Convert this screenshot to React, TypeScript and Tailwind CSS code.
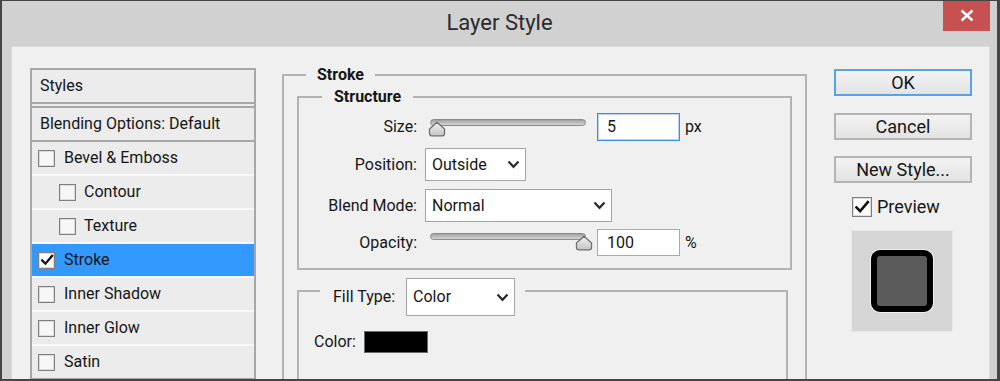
import React from 'react'

const STYLE_ROWS = [
  { label: 'Bevel & Emboss', indent: false, checked: false },
  { label: 'Contour', indent: true, checked: false },
  { label: 'Texture', indent: true, checked: false },
  { label: 'Stroke', indent: false, checked: true, active: true },
  { label: 'Inner Shadow', indent: false, checked: false },
  { label: 'Inner Glow', indent: false, checked: false },
  { label: 'Satin', indent: false, checked: false },
]

function Check({ size = 14 }: { size?: number }) {
  return (
    <svg width={size} height={size} viewBox="0 0 16 16" fill="none">
      <path d="M2.5 8.5 L6.2 12.2 L13.8 3.2" stroke="#111" strokeWidth="2.6" strokeLinecap="square" />
    </svg>
  )
}

function Checkbox({ checked, big = false }: { checked: boolean; big?: boolean }) {
  return (
    <div
      className={`flex items-center justify-center shrink-0 border border-[#7f7f7f] shadow-[inset_0_0_0_1px_#dcdcdc] ${
        big ? 'w-[20px] h-[20px]' : 'w-[17px] h-[17px]'
      } ${checked ? 'bg-white' : 'bg-[#f7f7f7]'}`}
    >
      {checked && <Check size={big ? 16 : 14} />}
    </div>
  )
}

function Chevron() {
  return (
    <svg width="13" height="9" viewBox="0 0 13 9" fill="none">
      <path d="M1.5 1.5 L6.5 6.8 L11.5 1.5" stroke="#2a2a2a" strokeWidth="2.2" />
    </svg>
  )
}

function Select({ value, width, height = 'h-[33px]' }: { value: string; width: string; height?: string }) {
  return (
    <div
      className={`${width} ${height} shrink-0 flex items-center justify-between bg-white border border-[#a4a4a4] pl-[6px] pr-[5px]`}
    >
      <span>{value}</span>
      <Chevron />
    </div>
  )
}

function Thumb() {
  return (
    <svg width="18" height="16" viewBox="0 0 18 16">
      <defs>
        <linearGradient id="thumbFill" x1="0" y1="0" x2="0" y2="1">
          <stop offset="0" stopColor="#f4f4f4" />
          <stop offset="1" stopColor="#c4c4c4" />
        </linearGradient>
      </defs>
      <path
        d="M1.5 8 L9 1.2 L16.5 8 L16.5 12.5 Q16.5 14.8 14.2 14.8 L3.8 14.8 Q1.5 14.8 1.5 12.5 Z"
        fill="url(#thumbFill)"
        stroke="#6f6f6f"
        strokeWidth="1.3"
        strokeLinejoin="round"
      />
    </svg>
  )
}

function Slider({ thumbLeft, trackTop, thumbTop }: { thumbLeft: string; trackTop: string; thumbTop: string }) {
  return (
    <div className="relative w-[156px] h-full ml-[13px] shrink-0">
      <div
        className={`absolute left-0 right-0 ${trackTop} h-[7px] rounded-full border border-[#8a8a8a] bg-linear-to-b from-[#a0a0a0] to-[#d6d6d6]`}
      />
      <div className={`absolute ${thumbLeft} ${thumbTop} leading-none`}>
        <Thumb />
      </div>
    </div>
  )
}

export default function App() {
  return (
    <div className="w-[1000px] h-[381px] overflow-hidden flex flex-col bg-[#d1d1d1] border-l-2 border-t border-r-[3px] border-b-2 border-[#454545] [font-family:Roboto,sans-serif] text-[16px] text-[#161616]">
      {/* Title bar */}
      <div className="relative h-[45px] shrink-0 flex items-center justify-center pb-[2px]">
        <span className="text-[22px] text-[#2b2b2b]">Layer Style</span>
        <div className="absolute top-[-1px] right-[7px] w-[47px] h-[31px] bg-[#c75050] flex items-center justify-center">
          <svg width="14" height="13" viewBox="0 0 14 13">
            <path d="M1.5 1.5 L12.5 11.5 M12.5 1.5 L1.5 11.5" stroke="#fff" strokeWidth="2.4" />
          </svg>
        </div>
      </div>

      {/* Dialog body */}
      <div className="flex-1 ml-[9px] w-[979px] bg-[#f0f0f0] border border-[#dadada] flex items-start pl-[18px] pt-[18px]">
        {/* Styles list */}
        <div className="mt-[3px] w-[226px] shrink-0 border-2 border-[#a7a7a7] bg-[#ececec]">
          <div className="h-[32px] flex items-center pl-[8px] border-b-2 border-[#a7a7a7] box-content">Styles</div>
          <div className="h-[2px]" />
          <div className="h-[36px] flex items-center pl-[8px] border-y-2 border-[#a7a7a7]">Blending Options: Default</div>
          {STYLE_ROWS.map((row, i) => (
            <div
              key={row.label}
              className={`flex items-center ${i === 0 ? 'h-[32px]' : 'h-[34px] border-t-2 border-[#f9f9f9]'} ${
                row.indent ? 'pl-[27px]' : 'pl-[6px]'
              } ${row.active ? 'bg-[#3399ff]' : ''}`}
            >
              <Checkbox checked={row.checked} />
              <span className={row.indent ? 'ml-[8px]' : 'ml-[9px]'}>{row.label}</span>
            </div>
          ))}
        </div>

        {/* Stroke group */}
        <fieldset className="ml-[26px] w-[525px] h-[330px] shrink-0 border-2 border-[#b3b3b3] px-[13px]">
          <legend className="ml-[9px] px-[11px] font-bold leading-[20px]">Stroke</legend>

          <fieldset className="mt-[2px] border-2 border-[#b3b3b3] pb-[12px]">
            <legend className="ml-[23px] px-[12px] font-bold leading-[20px]">Structure</legend>

            <div className="mt-[6px] h-[28px] flex items-center">
              <span className="w-[118px] text-right shrink-0">Size:</span>
              <Slider thumbLeft="left-[-2px]" trackTop="top-[6px]" thumbTop="top-[8px]" />
              <div className="ml-[11px] w-[83px] h-[28px] shrink-0 flex items-center pl-[9px] bg-white border border-[#3d8ee0] shadow-[inset_0_0_0_1px_#b5d5f3]">
                5
              </div>
              <span className="ml-[5px]">px</span>
            </div>

            <div className="mt-[7px] h-[33px] flex items-center">
              <span className="w-[118px] text-right shrink-0">Position:</span>
              <div className="ml-[8px]">
                <Select value="Outside" width="w-[101px]" />
              </div>
            </div>

            <div className="mt-[8px] h-[33px] flex items-center">
              <span className="w-[118px] text-right shrink-0">Blend Mode:</span>
              <div className="ml-[8px]">
                <Select value="Normal" width="w-[187px]" />
              </div>
            </div>

            <div className="mt-[7px] h-[27px] flex items-center">
              <span className="w-[118px] text-right shrink-0">Opacity:</span>
              <Slider thumbLeft="left-[145px]" trackTop="top-[4px]" thumbTop="top-[6px]" />
              <div className="ml-[11px] w-[83px] h-[27px] shrink-0 flex items-center pl-[9px] bg-white border border-[#a9a9a9]">
                100
              </div>
              <span className="ml-[5px]">%</span>
            </div>
          </fieldset>

          <fieldset className="mt-[8px] w-[491px] h-[120px] border-2 border-[#b3b3b3]">
            <legend className="ml-[21px] pl-[13px] pr-[10px]">
              <div className="h-[26px] flex items-start">
                <span className="mt-[9px] leading-[20px]">Fill Type:</span>
                <div className="ml-[11px]">
                  <Select value="Color" width="w-[109px]" height="h-[38px]" />
                </div>
              </div>
            </legend>
            <div className="mt-[27px] pl-[15px] h-[22px] flex items-center">
              <span>Color:</span>
              <div className="ml-[8px] w-[64px] h-[22px] bg-black border border-[#6a6a6a]" />
            </div>
          </fieldset>
        </fieldset>

        {/* Buttons */}
        <div className="ml-[27px] mt-[4px] w-[138px] shrink-0 flex flex-col text-[18px]">
          <div className="h-[27px] flex items-center justify-center border-2 border-[#55a3e9] bg-linear-to-b from-[#f3f3f3] to-[#e3e3e3]">
            OK
          </div>
          <div className="mt-[17px] h-[27px] flex items-center justify-center border-2 border-[#b4b4b4] bg-linear-to-b from-[#f3f3f3] to-[#e3e3e3]">
            Cancel
          </div>
          <div className="mt-[16px] h-[27px] flex items-center justify-center border-2 border-[#b4b4b4] bg-linear-to-b from-[#f3f3f3] to-[#e3e3e3]">
            New Style...
          </div>
          <div className="mt-[14px] ml-[18px] flex items-center">
            <Checkbox checked big />
            <span className="ml-[5px] leading-[20px]">Preview</span>
          </div>
          <div className="mt-[13px] ml-[17px] w-[102px] h-[102px] flex items-center justify-center bg-[#d5d5d5] border border-[#e8e8e8]">
            <div className="w-[62px] h-[62px] rounded-[9px] border-[6px] border-black bg-[#5b5b5b] shadow-[0_0_0_1px_#efefef]" />
          </div>
        </div>
      </div>
    </div>
  )
}
